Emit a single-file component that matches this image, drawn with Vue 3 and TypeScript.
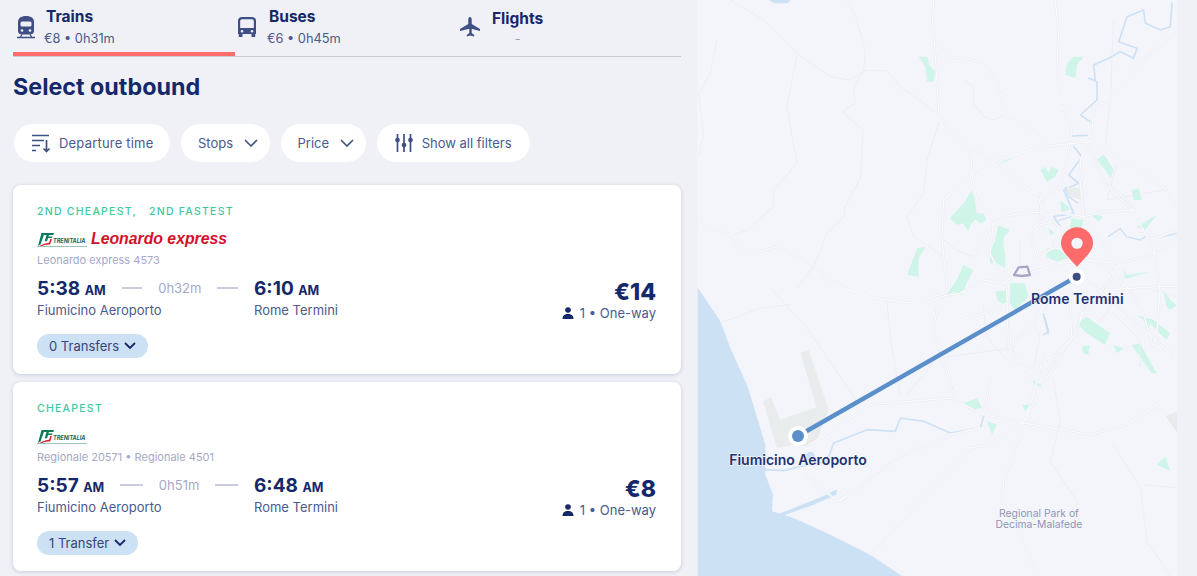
<script setup lang="ts">
interface Card {
  tag: string
  brandExpress: boolean
  service: string
  dep: string
  dur: string
  arr: string
  price: string
  transfers: string
}
const cards: Card[] = [
  { tag: '2ND CHEAPEST,\u00A0\u00A0 2ND FASTEST', brandExpress: true, service: 'Leonardo express 4573', dep: '5:38', dur: '0h32m', arr: '6:10', price: '€14', transfers: '0 Transfers' },
  { tag: 'CHEAPEST', brandExpress: false, service: 'Regionale 20571 • Regionale 4501', dep: '5:57', dur: '0h51m', arr: '6:48', price: '€8', transfers: '1 Transfer' },
]
const roadsTop = [
  'M710,0 706,60 712,130 720,240 725,335 745,375 820,445 860,465 885,485 960,545 1025,590 1035,640 1040,700',
  'M712,130 760,170 855,185 895,235 930,345 1020,400 1050,435',
  'M820,450 828,540 840,600 890,660',
  'M740,600 830,515 885,485 960,462 1040,440 1110,432 1180,425 1290,490 1400,560 1440,620',
  'M1075,0 1085,100 1080,200 1090,280',
  'M1095,315 1125,385 1110,480 1085,570 1035,600 1030,645',
  'M1440,95 1340,180 1240,300 1190,320 1185,400 1150,480 1160,650',
  'M1175,440 1220,540 1300,610 1310,630',
  'M740,590 735,720 750,864',
  'M0,670 90,700 150,765 240,740 340,790 400,840 450,864',
]
const thinTop = [
  'M450,0 480,60 505,155 500,210 470,265 475,310 435,335 498,390 493,490 490,535 445,620 440,650 390,700 350,800 300,864',
  'M100,0 200,60 300,160 400,230 460,240 505,212 570,212 610,260 680,310 725,345',
  'M300,165 270,320 300,490 230,570 230,620 150,690 110,705',
  'M725,370 690,480 680,580 630,650 650,710 740,770',
  'M800,240 830,260 830,310 860,350 890,360 920,345',
  'M60,120 40,220 5,280 20,400 5,470',
  'M1250,60 1240,300 1225,430',
  'M1260,490 1230,600 1400,570',
]
const greenTop = [
  '665,170 690,170 697,195 715,215 710,245 690,245 685,200',
  '1110,190 1130,170 1160,170 1140,195 1135,235 1105,225',
  '1030,510 1045,500 1055,520 1062,500 1085,510 1075,530 1050,545',
  '1200,480 1220,462 1250,510 1240,535 1225,510',
  '1305,570 1325,565 1335,600 1310,600',
  '630,825 660,745 685,740 665,775 665,830',
  '905,490 950,470 925,485',
  '1090,600 1120,625 1095,635',
]
/* Rome detail, drawn in a group placed at 729,540 */
const greenRome = [
  '30,115 60,80 72,70 95,30 105,60 110,100 130,100 140,120 120,130 105,118 92,135 85,155 70,130 50,135',
  '150,220 165,180 175,135 210,150 192,170 190,190 197,230 195,265 170,250 150,250',
  '15,350 50,300 70,255 100,270 85,300 65,345 40,335',
  '320,205 360,210 385,235 350,245 320,230',
  '165,335 200,330 200,375 175,365',
  '210,310 255,310 265,350 225,390 210,370',
  '410,430 440,410 510,460 495,495 440,460',
  '425,500 450,495 445,525 430,520',
  '520,495 550,505 530,520',
  '575,495 600,490 650,580 635,580',
  '590,405 640,420 690,460 680,480 630,430 625,455 610,420',
  '670,330 690,360 710,375 690,390 680,380',
  '360,65 390,90 365,95',
  '395,115 430,120 425,145 390,145',
  '450,100 490,110 475,125',
  '325,145 345,160 330,165',
  '575,30 600,40 585,60',
  '590,140 650,105 615,150',
  '550,260 560,285 630,275 555,298',
]
const roadsRome = [
  'M100,230 130,175 160,130 200,108 250,100 340,95 430,110 500,95 580,90 620,170 640,200 660,330 650,470 640,500',
  'M0,350 60,340 130,300 190,310 220,290 300,270 360,250 450,240 530,250 620,230 710,190',
  'M160,130 150,220 200,320 205,500 250,560 280,600',
  'M300,40 310,100 270,160 290,230 350,200',
  'M500,0 520,40 580,90',
  'M420,0 430,110 500,210 520,290 430,400 400,470 300,600',
  'M210,500 280,430 350,320 420,300',
  'M440,300 560,400 700,530',
  'M500,330 650,320 710,320',
  'M280,140 340,125 370,150 340,190',
  'M420,420 430,380 390,350 320,370 290,400',
  'M400,470 340,530 270,560',
  'M60,420 130,400 200,370',
  'M390,350 395,470',
  'M450,240 550,300 610,400 640,500',
  'M600,160 660,170 710,150',
]
const thinRome = [
  'M0,170 50,210 100,230',
  'M130,380 140,470 200,540',
  'M280,430 300,470 280,560',
  'M550,300 500,400 480,420',
  'M640,330 710,350',
  'M520,400 600,480 600,560',
  'M240,180 240,260',
  'M330,340 270,380',
]
const greenBottom = [
  '800,345 840,330 855,360 820,365',
  '975,350 1000,350 985,370',
  '1005,275 1040,295 1015,295',
  '870,400 900,410 885,440',
  '1380,530 1405,505 1420,550',
]
const roadsBottom = [
  'M340,470 520,350 760,330 860,380 980,405 1180,440 1290,410 1380,350 1440,440',
  'M430,640 600,510 760,440 850,420',
  'M520,800 820,480 880,470 980,400 1050,270 1130,140',
  'M930,80 950,220 1000,240',
  'M1040,200 1010,320 970,430 920,580 915,640 980,760 1020,864',
  'M720,60 710,130 770,320',
  'M440,0 530,30 640,45 730,20',
  'M330,560 420,640 470,610',
  'M880,270 860,380',
]
const thinBottom = [
  'M220,0 330,120 480,340',
  'M570,40 580,150 610,320',
  'M70,105 190,60 280,50',
  'M1070,280 1090,400 1060,520 1140,640 1130,720',
  'M1250,470 1330,600 1350,760 1420,864',
  'M1340,590 1440,600',
  'M630,320 720,210 950,180',
]
</script>

<template>
  <div class="page">
    <main class="results">
      <nav class="tabs">
        <div class="tab tab-train active">
          <svg class="tab-icon" viewBox="0 0 20 24" width="20" height="24">
            <path fill="#3f4f85" d="M10 1C4.800 1 2 3.200 2 7v9c0 2.200 1.600 3.600 3.800 3.600h8.400c2.200 0 3.800-1.400 3.800-3.600V7c0-3.800-2.800-6-8-6z" />
            <rect x="4.500" y="6.500" width="11" height="5" rx="1.500" fill="#f0f1f6" />
            <circle cx="6" cy="15.500" r="1.300" fill="#f0f1f6" />
            <circle cx="14" cy="15.500" r="1.300" fill="#f0f1f6" />
            <path d="M1 22.500h18M4 22.500l2-3M16 22.500l-2-3" stroke="#3f4f85" stroke-width="1.300" fill="none" />
          </svg>
          <div class="tab-text">
            <div class="tab-title">Trains</div>
            <div class="tab-sub">€8 • 0h31m</div>
          </div>
        </div>
        <div class="tab tab-bus">
          <svg class="tab-icon" viewBox="0 0 20 24" width="20" height="24">
            <path fill="#3f4f85" fill-rule="evenodd" d="M5 2h10c2.200 0 4 1.500 4 3.500V19h-.8v3h-3.700v-3h-9v3H1.800v-3H1V5.500C1 3.500 2.800 2 5 2zM3.200 6v7h13.600V6c0-1-.8-1.700-1.800-1.700H5C4 4.300 3.200 5 3.200 6zM5 15a1.300 1.300 0 100 2.600A1.300 1.300 0 005 15zm10 0a1.300 1.300 0 100 2.600 1.300 1.300 0 000-2.600z" />
          </svg>
          <div class="tab-text">
            <div class="tab-title">Buses</div>
            <div class="tab-sub">€6 • 0h45m</div>
          </div>
        </div>
        <div class="tab tab-plane">
          <svg class="tab-icon" viewBox="0 0 22 22" width="22" height="22">
            <path fill="#3f4f85" d="M11 1c1.100 0 1.700 1.200 1.700 2.500V8l8.300 5v2l-8.300-2.300V17l2.500 2v1.500L11 19.600l-3.200.9V19l2.500-2v-4.300L1 15v-2l8.300-5V3.500C9.300 2.200 9.900 1 11 1z" />
          </svg>
          <div class="tab-text centered">
            <div class="tab-title">Flights</div>
            <div class="tab-sub muted">-</div>
          </div>
        </div>
      </nav>

      <h1 class="heading">Select outbound</h1>

      <div class="filters">
        <button class="filter filter-sort">
          <svg viewBox="0 0 20 20" width="20" height="20" fill="none" stroke="#3f4f85" stroke-width="1.700">
            <path d="M1 2.500h17M1 7.500h12M1 12.500h8M1 17.500h4M15.500 7v11.500M12.500 15.500l3 3 3-3" />
          </svg>
          <span>Departure time</span>
        </button>
        <button class="filter filter-drop">
          <span>Stops</span>
          <svg viewBox="0 0 14 8" width="14" height="8" fill="none" stroke="#3f4f85" stroke-width="1.600"><path d="M1 1l6 6 6-6" /></svg>
        </button>
        <button class="filter filter-drop">
          <span>Price</span>
          <svg viewBox="0 0 14 8" width="14" height="8" fill="none" stroke="#3f4f85" stroke-width="1.600"><path d="M1 1l6 6 6-6" /></svg>
        </button>
        <button class="filter filter-all">
          <svg viewBox="0 0 18 18" width="18" height="18" fill="#3f4f85" stroke="#3f4f85" stroke-width="1.700">
            <path d="M2.500 0v18M9 0v18M15.500 0v18" fill="none" />
            <circle cx="2.500" cy="6" r="1.500" />
            <circle cx="9" cy="11" r="1.500" />
            <circle cx="15.500" cy="6" r="1.500" />
          </svg>
          <span>Show all filters</span>
        </button>
      </div>

      <div class="cards">
        <article v-for="c in cards" :key="c.service" class="card">
          <div class="tag">{{ c.tag }}</div>
          <div class="brand">
            <div class="trenitalia">
              <svg viewBox="0 0 17 14" width="17" height="14">
                <path fill="#0d7a5f" d="M4.500 0H17l-.7 2h-4.400l-1.800 6.200H7.700L9.500 2H6.900L3.500 11.500 1 13z" />
                <path fill="#0d7a5f" d="M11 3.500h4.500l-.5 1.500h-4.400z" />
                <path fill="#d3202f" d="M2 13.500C5 11.500 8 10 12 9.800c.6-1.200 1-2.600 1.300-3.800h1.600l-1.800 5.500C9 11.300 6 12 3.500 14z" />
              </svg>
              <span class="tren-text">TRENITALIA</span>
              <i class="tren-line"></i>
            </div>
            <span v-if="c.brandExpress" class="leonardo">Leonardo express</span>
          </div>
          <div class="service">{{ c.service }}</div>
          <div class="body">
            <div class="journey">
              <div class="time-row">
                <div class="times">
                  <span class="time">{{ c.dep }} <small>AM</small></span>
                  <i class="dash"></i>
                  <span class="dur">{{ c.dur }}</span>
                  <i class="dash"></i>
                </div>
                <span class="time">{{ c.arr }} <small>AM</small></span>
              </div>
              <div class="stations">
                <span class="from">Fiumicino Aeroporto</span>
                <span>Rome Termini</span>
              </div>
            </div>
            <div class="fare">
              <div class="price">{{ c.price }}</div>
              <div class="pax">
                <svg viewBox="0 0 12 12" width="12" height="12"><circle cx="6" cy="3" r="2.800" fill="#15286a" /><path d="M0.500 12c0-3.500 2-5 5.500-5s5.500 1.500 5.500 5z" fill="#15286a" /></svg>
                <span>1 • One-way</span>
              </div>
            </div>
          </div>
          <button class="transfers">
            <span>{{ c.transfers }}</span>
            <svg viewBox="0 0 12 8" width="12" height="8" fill="none" stroke="#15286a" stroke-width="1.800"><path d="M1 1l5 5 5-5" /></svg>
          </button>
        </article>
      </div>
    </main>

    <svg class="map" viewBox="0 0 1440 1728" width="480" height="576" preserveAspectRatio="none">
      <rect width="1440" height="1728" fill="#f4f5fa" />
      <!-- upper half -->
      <g stroke-linejoin="round" stroke-linecap="round">
        <polygon v-for="p in greenTop" :key="p" :points="p" fill="#cff5e9" />
        <path fill="none" stroke="#cde1f5" stroke-width="5" d="M1425,10 1420,80 1390,90 1345,70 1340,30 1290,50 1265,125 1320,145 1310,175 1270,155 1235,175 1190,195 1195,240 1175,235 1200,245 1200,300 1150,345 1180,365" />
        <path fill="none" stroke="#cde1f5" stroke-width="5" d="M1125,408 1170,406M1130,440 1155,470 1115,525 1145,550 1100,570 1130,640 1070,650 1090,680" />
        <path fill="#cde1f5" d="M215,0h65l-8,10h-40z" />
        <path v-for="r in thinTop" :key="r" :d="r" fill="none" stroke="#eceef3" stroke-width="3" />
        <g fill="none">
          <path v-for="r in roadsTop" :key="r" :d="r" stroke="#e8eaef" stroke-width="7" />
          <path v-for="r in roadsTop" :key="r + 'i'" :d="r" stroke="#f9fafc" stroke-width="4" />
        </g>
      </g>
      <!-- lower half -->
      <g transform="translate(0 864)" stroke-linejoin="round" stroke-linecap="round">
        <path fill="#cde1f5" d="M3,0 70,100 100,180 150,290 175,370 205,470 205,560 228,620 225,670 290,690 400,740 520,800 615,864H0V0z" />
        <path fill="#cde1f5" d="M240,680 385,622 420,604 418,620 350,650 250,686z" />
        <path fill="#e9ecec" d="M310,195 335,185 395,365 360,455 325,475 290,470 240,480 198,340 222,328 250,395 358,358z" />
        <polygon v-for="p in greenBottom" :key="p" :points="p" fill="#cff5e9" />
        <path fill="none" stroke="#cde1f5" stroke-width="5" d="M205,545 260,548 310,535 390,520 410,465 510,425 595,430 610,390 680,400 760,435 850,420 860,385M1040,80 1055,130 1040,140" />
        <circle cx="340" cy="505" r="14" fill="#cde1f5" />
        <path fill="#e9ecec" d="M1405,385 1440,370V440z" />
        <path v-for="r in thinBottom" :key="r" :d="r" fill="none" stroke="#eceef3" stroke-width="3" />
        <g fill="none">
          <path v-for="r in roadsBottom" :key="r" :d="r" stroke="#e8eaef" stroke-width="7" />
          <path v-for="r in roadsBottom" :key="r + 'i'" :d="r" stroke="#f9fafc" stroke-width="4" />
        </g>
        <text class="park" x="1026" y="686">Regional Park of</text>
        <text class="park" x="1026" y="721">Decima-Malafede</text>
      </g>
      <!-- Rome detail -->
      <svg x="729" y="540" width="711" height="600" viewBox="0 0 711 600">
        <polygon v-for="p in greenRome" :key="p" :points="p" fill="#cff5e9" />
        <path fill="#e9ecec" d="M375,20 420,25 425,60 390,50z" />
        <path fill="none" stroke="#cde1f5" stroke-width="4" d="M375,20 385,50 415,70M340,130 360,120 395,110M505,170 540,145 560,170 600,180 625,165M670,170 710,160M310,400 325,465" />
        <g fill="none" stroke-linejoin="round" stroke-linecap="round">
          <path v-for="r in thinRome" :key="r" :d="r" stroke="#eceef3" stroke-width="3" />
          <path v-for="r in roadsRome" :key="r" :d="r" stroke="#e8eaef" stroke-width="7" />
          <path v-for="r in roadsRome" :key="r + 'i'" :d="r" stroke="#f9fafc" stroke-width="4" />
        </g>
        <path fill="none" stroke="#a3a8c6" stroke-width="7" stroke-linejoin="round" d="M222,285 236,262 262,260 270,285 245,288z" />
      </svg>
      <rect width="3" height="1728" fill="#f0f1f6" opacity="0.8" />
      <!-- route -->
      <line x1="1139" y1="830" x2="303" y2="1308" stroke="#5b8fcb" stroke-width="13" />
      <circle cx="1139" cy="830" r="24" fill="#fff" />
      <circle cx="1139" cy="830" r="12" fill="#3f4f85" />
      <circle cx="303" cy="1308" r="30" fill="#fff" />
      <circle cx="303" cy="1308" r="18" fill="#5b8fcb" />
      <path fill="#ff6b6b" d="M1140,800 1108,765C1098,753 1092,743 1092,730A48,48 0 0 1 1188,730C1188,743 1182,753 1172,765z" />
      <circle cx="1140" cy="730" r="17" fill="#f4f5fa" />
      <text class="label" x="1141" y="911">Rome Termini</text>
      <text class="label" x="303" y="1394">Fiumicino Aeroporto</text>
    </svg>
    <div class="strip"></div>
  </div>
</template>

<style scoped>
.page {
  display: flex;
  width: 1197px;
  height: 576px;
  overflow: hidden;
  background: #f0f1f6;
  font-family: Inter, "Noto Sans", sans-serif;
  color: #15286a;
}
.results {
  width: 697px;
  flex: none;
  padding: 0 16px 0 13px;
  box-sizing: border-box;
}
.tabs {
  display: flex;
  height: 57px;
  border-bottom: 1px solid #c9cbd0;
  box-sizing: border-box;
}
.tab {
  width: 222px;
  flex: none;
  display: flex;
  box-sizing: border-box;
  height: 56px;
  padding-top: 7px;
}
.tab.active {
  border-bottom: 4px solid #ff6b6b;
}
.tab-train {
  padding-left: 3px;
}
.tab-bus {
  padding-left: 2px;
}
.tab-plane {
  padding-left: 2px;
}
.tab-icon {
  margin-top: 8px;
  flex: none;
}
.tab-plane .tab-icon {
  margin-top: 9px;
}
.tab-train .tab-text {
  margin-left: 10px;
}
.tab-bus .tab-text {
  margin-left: 12px;
}
.tab-plane .tab-text {
  margin-left: 11px;
  margin-top: 2px;
  text-align: center;
}
.tab-title {
  font-size: 15.5px;
  font-weight: 700;
  line-height: 20px;
}
.tab-sub {
  font-size: 12.8px;
  line-height: 16px;
  margin-top: 4px;
  margin-left: -2px;
  color: #4a5a8c;
}
.tab-sub.muted {
  color: #9aa0c0;
  margin-top: 2px;
  margin-left: 0;
}
.heading {
  margin: 16px 0 0;
  font-size: 23.3px;
  font-weight: 700;
  line-height: 28px;
}
.filters {
  display: flex;
  gap: 10.5px;
  margin-top: 23px;
  padding-left: 1px;
}
.filter {
  display: flex;
  align-items: center;
  height: 38px;
  padding: 0;
  border: 0;
  border-radius: 19px;
  background: #fff;
  font: inherit;
  font-size: 13px;
  color: #4a5a8c;
}
.filter-sort {
  gap: 8px;
  padding: 0 17px;
}
.filter-sort span {
  letter-spacing: 0.2px;
}
.filter-drop {
  gap: 11px;
  padding: 0 12px 0 17px;
}
.filter-all {
  gap: 9px;
  padding: 0 18px;
}
.cards {
  display: flex;
  flex-direction: column;
  gap: 8px;
  margin-top: 23px;
}
.card {
  height: 189px;
  box-sizing: border-box;
  padding: 20px 25px 0 24px;
  background: #fff;
  border-radius: 8px;
  box-shadow: 0 1px 4px rgba(21, 40, 106, 0.18);
}
.tag {
  font-size: 10.5px;
  font-weight: 500;
  line-height: 14px;
  letter-spacing: 1.25px;
  color: #3ec99d;
}
.brand {
  display: flex;
  align-items: center;
  gap: 4px;
  height: 18px;
  margin-top: 11px;
}
.trenitalia {
  position: relative;
  width: 50px;
  height: 16px;
}
.tren-text {
  position: absolute;
  left: 16px;
  top: 7px;
  font-size: 5.5px;
  line-height: 6px;
  font-style: italic;
  font-weight: 700;
  color: #0a6a52;
}
.tren-line {
  position: absolute;
  left: 0;
  top: 14.5px;
  width: 50px;
  height: 1.5px;
  background: #9cc4b8;
}
.leonardo {
  font-family: "Liberation Sans", sans-serif;
  font-size: 15.8px;
  font-weight: 700;
  font-style: italic;
  color: #d3112b;
  white-space: nowrap;
}
.service {
  margin-top: 5px;
  font-size: 11px;
  line-height: 14px;
  color: #a6a9c4;
}
.body {
  display: flex;
  justify-content: space-between;
  margin-top: 9px;
}
.journey {
  flex: none;
}
.time-row {
  display: flex;
  align-items: center;
  height: 24px;
}
.times {
  display: flex;
  align-items: center;
  gap: 16px;
  width: 201px;
  margin-right: 16px;
}
.time {
  font-size: 19px;
  font-weight: 700;
  white-space: nowrap;
}
.time small {
  font-size: 12.5px;
  font-weight: 700;
}
.dash {
  flex: 1;
  height: 1.5px;
  background: #c9cce0;
}
.dur {
  font-size: 13px;
  color: #a6a9c4;
}
.stations {
  display: flex;
  font-size: 13px;
  line-height: 18px;
  margin-top: 1px;
  color: #4a5a8c;
}
.from {
  width: 217px;
}
.fare {
  margin-top: 1px;
  text-align: right;
}
.price {
  font-size: 23px;
  font-weight: 800;
  line-height: 30px;
}
.pax {
  display: flex;
  justify-content: flex-end;
  align-items: center;
  gap: 6px;
  margin-top: -2px;
  font-size: 13px;
  line-height: 16px;
  color: #4a5a8c;
}
.transfers {
  display: flex;
  align-items: center;
  gap: 5px;
  height: 24px;
  margin-top: 13px;
  padding: 0 12px;
  border: 0;
  border-radius: 12px;
  background: #cde1f5;
  font: inherit;
  font-size: 13px;
  color: #34477f;
}
.map {
  flex: none;
  display: block;
}
.strip {
  flex: 1;
  background: #f0f1f6;
}
.label {
  font-size: 42px;
  font-weight: 600;
  text-anchor: middle;
  fill: #1f3272;
  paint-order: stroke;
  stroke: #f4f5fa;
  stroke-width: 4px;
}
.park {
  font-size: 31px;
  text-anchor: middle;
  fill: #8f95b8;
}
</style>
